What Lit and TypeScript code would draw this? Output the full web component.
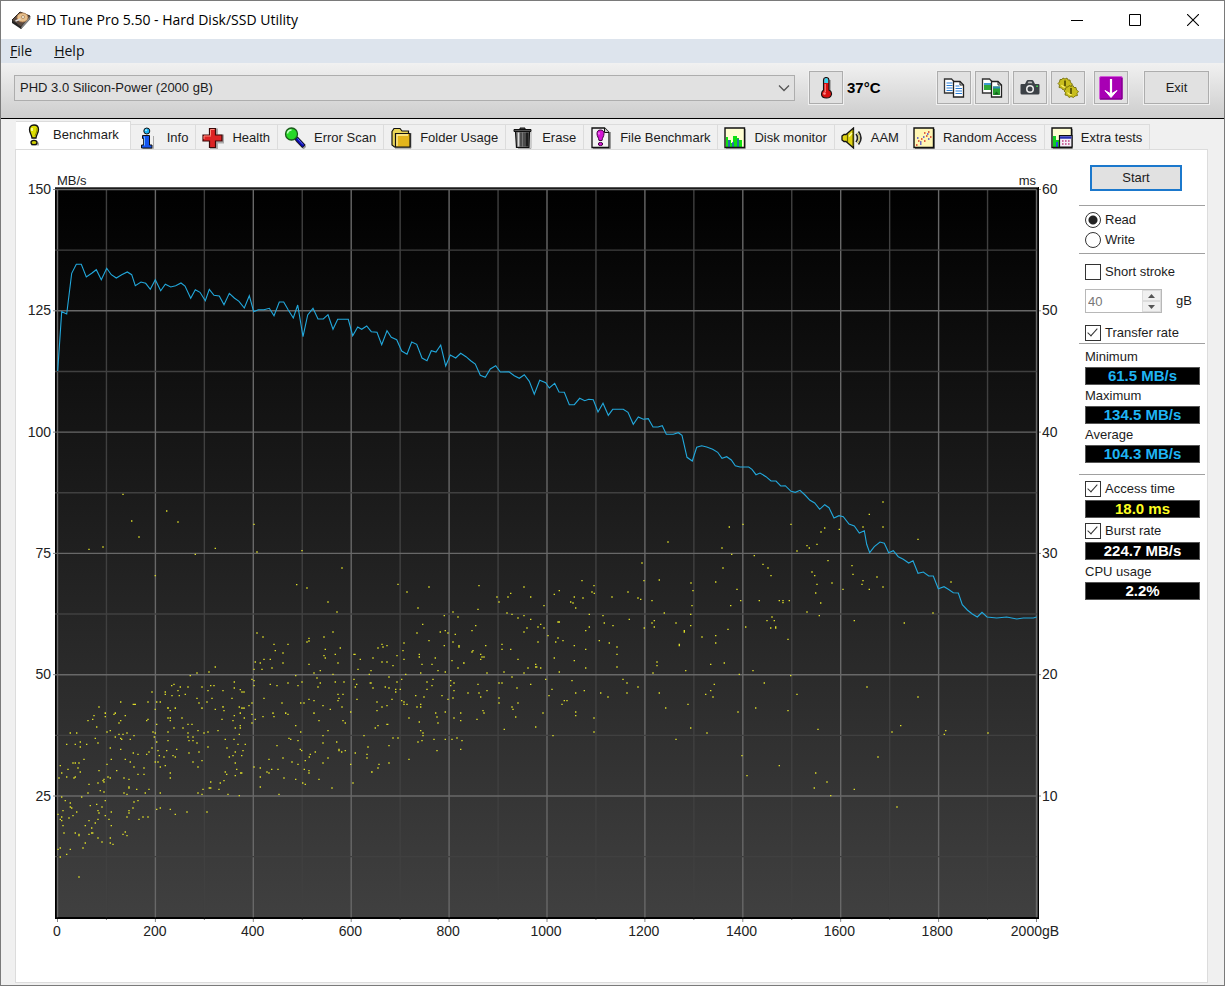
import { LitElement, html, svg, css } from "lit";
import { customElement, state } from "lit/decorators.js";

/* Chart geometry: the plot spans x 55..1039 and y 187..919 in chart units. */
const GRID_LEFT = 57.5;
const GRID_STEP_X = 48.95;
const GRID_TOP = 189.5;
const GRID_STEP_Y = 60.65;

/* Samples are stored in blocks, in thirds of a chart unit from the block's origin. */
interface Block {
  x: number;
  y: number;
  samples: string;
}

const TRANSFER: Block[] = [
  {
    x: 40,
    y: 180,
    samples:
      "53,573 65,395 80,402 95,280 109,253 124,253 139,291 155,280 169,269 184,299 200,265 214,284 229,294 245,284 262,276 275,284 286,317 303,306 317,310 331,328 346,299 362,332 376,313 392,321 407,317 423,309 435,318 452,355 466,329 480,337 496,362 508,328 522,346 538,348 552,374 568,340 583,354 597,364 613,384 628,347 641,395 655,389 672,389 688,385 702,407 718,366 731,366 745,390 760,414 773,375 789,470 803,405 819,385 834,417 850,417 864,404 879,448 893,418 925,418 938,467 953,441",
  },
  {
    x: 360,
    y: 250,
    samples:
      "5,238 20,228 34,245 51,247 65,284 81,242 94,262 110,269 125,303 141,313 155,276 170,283 186,324 201,332 214,302 228,306 242,285 257,348 271,315 287,324 302,310 318,320 332,332 346,342 361,376 376,382 391,357 407,347 421,366 447,365 463,377 478,385 493,374 508,394 523,433 539,391 557,398 568,414 584,400 597,426 613,427 628,464 643,464 659,445 674,452 686,448 700,449 714,486 729,460 745,496 758,478 790,478 804,487 820,523 835,501 850,508 865,506 879,531 894,531 907,527 919,553 940,553 955,548 966,556 981,622 997,633",
  },
  {
    x: 690,
    y: 380,
    samples:
      "20,202 35,197 50,201 68,208 83,217 96,235 110,230 124,240 136,257 150,261 176,261 186,268 198,284 210,279 228,290 243,303 258,303 272,318 286,317 303,334 316,337 330,331 345,345 360,361 374,369 389,388 404,374 417,383 432,414 447,407 460,410 477,432 493,438 508,459 523,452 530,493 539,518 553,500 570,486 583,490 596,518 610,512 625,530 640,538 656,549 669,542 684,580 700,576 716,588 730,588 745,626 762,620 775,628 790,638 805,639 817,674 832,690 847,702 862,711 876,697 891,711 920,714 950,711 980,717 1000,714 1030,714 1040,711",
  },
];

const ACCESS: Block[] = [
  {
    x: 40,
    y: 480,
    samples:
      "249,43 380,93 275,123 414,126 297,171 642,133 147,208 189,201 526,205 466,223 651,216 786,212 346,287 906,264 770,314 801,324 864,366 891,396 651,459 669,471 879,456 852,471 807,475 807,483 801,486 702,493 744,493 706,512 729,519 856,508 886,523 901,504 852,527 856,534 945,523 942,523 1014,504 999,534 961,538 672,538 691,538 646,546 661,549 729,549 894,549 807,553 642,568 666,568 696,564 526,561 507,576 471,579 451,587 841,572 822,579 879,583 954,568 993,572 988,583 767,587 831,594 636,598 642,602 583,606 786,606 744,609 841,609 886,606 912,606 942,598 950,613 946,621 991,609 999,624 402,613 395,617 421,621 444,621 486,621 512,617 522,617 583,624 642,617 691,613 711,617 774,617 834,621 601,629 606,636 612,636 549,632 504,632 414,632 376,636 336,636 376,643 396,647 418,647 436,643 471,655 516,655 576,655 672,655 894,643 909,643 897,655 894,662 951,658 807,658 822,662 242,666 324,666 350,666 361,666 477,669 501,666 636,669 726,669 782,669 792,669 1011,666 177,681 280,673 286,673 346,688 384,685 391,692 406,685 486,685 526,688 549,681 552,692 598,681 606,685 612,685 627,677 849,677 871,688 906,681 932,696 1011,692 196,699 222,703 226,699 256,707 162,707 583,707 601,699 636,703 699,699 737,699 744,703 822,699",
  },
  {
    x: 40,
    y: 700,
    samples:
      "242,6 283,13 286,13 324,6 350,6 361,6 477,9 501,6 636,9 726,9 782,9 792,9 177,21 346,28 384,23 391,32 406,24 486,24 526,28 549,20 552,32 598,21 606,24 612,24 627,17 849,17 871,28 906,21 932,36 1011,32 196,40 196,50 222,43 226,40 256,47 162,47 158,58 144,62 242,62 237,69 324,58 320,62 170,81 384,54 391,54 391,62 426,54 444,73 456,73 350,73 546,58 583,47 579,62 601,40 613,54 636,43 636,69 646,58 669,50 699,40 702,50 737,40 744,43 837,62 822,40 909,62 916,69 767,77 1014,77 1006,84 91,99 110,99 201,96 211,92 237,103 249,103 261,99 226,111 242,115 245,118 271,118 282,107 339,96 346,99 343,111 384,96 402,84 429,84 444,99 474,92 492,99 504,96 534,92 586,84 601,77 601,84 598,103 444,111 459,111 447,122 459,122 384,122 350,126 782,96 864,92 849,107 972,107 747,115 752,118 774,122 121,126 80,133 106,133 140,133 121,141 174,129 166,115 471,129 556,118 582,118 594,133 616,133 711,137 849,129 890,126 211,144 242,148 336,144 354,152 380,152 410,148 504,141 561,144 609,152 586,156 781,148 785,152 897,148 897,152 905,156 916,152 984,141 946,159 981,163 981,174 826,156 811,163 280,159 294,163 327,156 320,163 447,159 477,156 358,167 372,171 399,167 406,171 568,171 579,167 605,167 132,178 214,178 256,178 271,186 99,189 106,189 117,189 61,197 201,193 346,186 354,186 376,197 459,186 486,182 586,189 687,178 729,174 756,186 774,193 796,182 808,171 864,174 849,189 932,193 282,201 361,201 474,201 590,208 642,201 661,204 84,208 114,204 121,216 177,212 230,212 312,204 312,223 294,223 65,219 556,216 560,223 602,219 605,219 586,227 695,208 714,208 681,216 687,219 793,208 807,212 807,219 1014,204 995,216 57,234 80,231 102,234 106,231 204,231 211,234 252,234 267,238 391,219 391,234 661,231 732,234 767,238 837,238 192,238 189,242 192,246 174,249 147,253 552,242 541,249 512,246 788,249 796,253 939,249 876,264 267,261 267,264 290,268 327,268 489,268 508,264 512,264 537,268 661,261 181,272 192,276 144,279 252,279 261,283 316,279 361,279 474,279 486,283 564,283 598,287 717,283 65,291 125,291 76,302 91,309 196,302 282,306 294,302 91,321 95,324 151,317 170,313 186,321 69,332 110,336 99,347 174,332 177,339 196,347 214,336 267,332 267,339 279,324 350,328 361,324 391,328 406,343 441,336 501,336 54,343 65,351 61,358 65,362 87,354 147,362 174,358 166,369 207,358 261,351 297,358 309,351 324,351 69,377 136,377 214,377 155,384 72,399 106,399 117,403 117,407 147,403 155,399 158,399 249,403 256,396 261,407 174,414 211,414 136,429 186,426 211,429 219,433 54,448 61,444 91,448 129,444 80,463 61,471 117,531",
  },
  {
    x: 370,
    y: 580,
    samples:
      "84,13 177,21 327,17 462,21 111,36 381,51 387,66 414,51 422,40 482,51 522,77 553,43 568,32 613,51 639,54 602,66 609,69 617,84 636,2 672,17 666,36 673,40 726,51 774,36 804,54 812,58 846,62 822,2 868,0 969,32 966,77 144,84 324,88 249,96 223,107 264,111 411,99 426,103 444,114 462,107 482,118 512,133 504,141 522,144 471,144 462,156 658,103 699,107 778,118 703,129 729,137 658,141 647,152 564,126 568,126 883,99 962,103 918,129 962,137 853,122 846,129 853,141 823,144 943,152 943,156 996,171 928,193 928,197 158,133 141,159 317,137 306,152 211,156 226,152 234,159 256,163 534,167 564,174 557,186 579,182 613,197 688,182 718,189 741,201 741,223 36,193 24,204 39,201 51,197 102,189 177,182 249,186 223,197 267,197 267,201 347,197 309,212 306,216 396,193 396,208 422,208 504,186 647,208 99,212 9,234 81,227 148,223 148,231 102,238 36,246 51,246 69,257 156,253 186,253 196,234 246,242 281,249 282,249 332,223 332,238 336,231 342,231 444,238 553,234 613,242 497,253 497,261 500,261 512,264 474,264 741,261 647,264 861,246 861,257 849,279 947,272 3,272 204,272 226,276 152,279 264,264 351,279 402,276 462,279 568,276 107,283 57,291 95,298 189,298 3,309 81,306 171,306 186,317 242,302 242,317 252,309 324,313 387,309 396,309 426,291 482,313 527,298 606,302 759,298 771,309 804,321 9,324 46,321 57,324 77,328 77,336 91,328 171,328 252,332 294,339 327,339 351,332 332,351 441,324 546,328 643,332 617,339 692,339 771,339 714,351 868,339 1007,343 537,347 137,347 162,351 216,347 249,354 234,358 66,358 95,362 102,366 102,373 111,373 21,366 36,381 51,377 21,392 152,373 152,381 141,381 387,354 387,369 444,369 426,381 429,388 583,362 591,362 576,373 887,384 954,373 226,396 197,399 201,411 117,414 148,426 204,429 252,414 272,399 272,422 339,392 342,399 321,418 437,411 519,399 617,396 617,407 672,414 672,456 497,441 403,448 962,444 1011,459 51,433 53,433 24,437 16,444 152,452 159,459 159,467 549,467 69,474 84,474 144,486 156,482 192,478 226,478 246,478 261,474 276,482 57,497 201,512 272,508 918,478 117,538 57,549 27,553 24,564 6,576",
  },
  {
    x: 690,
    y: 380,
    samples:
      "579,366 538,403 118,441 159,433 303,433 404,444 393,456 448,448 519,441 579,441 684,478 96,504 125,523 193,527 321,513 351,497 358,504 381,493 219,553 234,564 99,564 243,587 414,542 366,576 374,587 486,557 489,583 561,591 -66,486 -144,549 3,609",
  },
  {
    x: 700,
    y: 580,
    samples:
      "47,6 111,28 122,62 92,77 178,62 238,62 249,62 249,68 268,62 351,13 347,39 362,69 396,9 429,28 489,2 486,13 508,28 549,21 753,6 321,96 358,107 463,122 613,129 699,99 216,111 201,122 223,122 212,144 227,141 227,144 137,141 84,148 47,167 47,189 6,171 264,178 32,253 73,249 159,272 118,283 272,287 193,309 43,313 32,332 17,343 39,351 291,343 501,321 654,351 114,396 167,384 264,392 21,459 354,448 576,456 602,437 733,463 737,452 864,459 126,527 534,531 238,557 141,587 347,579 381,606 343,624 463,628 392,647 591,681",
  },
];

const decode = (blocks: Block[]): [number, number][] =>
  blocks.flatMap((b) =>
    b.samples.split(" ").map((s): [number, number] => {
      const [px, py] = s.split(",").map(Number);
      return [+(b.x + px / 3).toFixed(1), +(b.y + py / 3).toFixed(1)];
    })
  );

const TRANSFER_POINTS = decode(TRANSFER).map((p) => p.join(",")).join(" ");
const ACCESS_PATH = decode(ACCESS)
  .map(([x, y]) => `M${(x - 0.7).toFixed(1)} ${y}h1.4`)
  .join("");

const outline = "#111";

const icons = {
  disk: svg`<svg viewBox="0 0 20 20" width="20" height="20"><path d="M1 10 9 2l10 4-9 11z" fill="#5c4a40" stroke="#2b2420"/><path d="m1 10 9 7v2L1 13z" fill="#222"/><path d="m19 6-9 11v2l9-10z" fill="#8d8d8d" stroke="#333" stroke-width=".5"/><ellipse cx="11.500" cy="7.500" rx="5.500" ry="4.500" fill="#e8c08c" stroke="#a9774a" stroke-width=".8"/><circle cx="12" cy="7" r="1.500" fill="#fff3df" stroke="#8a6640" stroke-width=".6"/><path d="m4.500 11 5-2" stroke="#ddd" stroke-width="1.500"/></svg>`,
  benchmark: svg`<svg viewBox="0 0 22 22" width="22" height="22"><path d="M8 20h8" stroke="#aaa" stroke-width="3"/><path d="M11 1c3.500 0 4.500 2 4.500 4.500C15.500 9 13.500 10 13 14H9C8.500 10 6.500 9 6.500 5.500 6.500 3 7.500 1 11 1z" fill="#dede00" stroke="${outline}" stroke-width="1.300"/><path d="M9 4v3" stroke="#ffffb0" stroke-width="1.600"/><path d="M14 4c.5 3-1 5-2 8" stroke="#8c8c00" fill="none"/><ellipse cx="11" cy="18.500" rx="3" ry="2.200" fill="#d0d000" stroke="${outline}" stroke-width="1.300"/></svg>`,
  info: svg`<svg viewBox="0 0 22 22" width="22" height="22"><path d="M6 21.500h10.500V9" stroke="#aaa" fill="none"/><circle cx="9.800" cy="4" r="3" fill="#19b4f5" stroke="${outline}"/><path d="M5.500 8.500h7v9.500H15v3H4.500v-3h2.200v-6.500H5.500z" fill="#1454f0" stroke="${outline}"/><path d="M7.500 9.500v9" stroke="#6eb4ff"/><circle cx="9" cy="3.200" r="1" fill="#a8eaff"/></svg>`,
  health: svg`<svg viewBox="0 0 22 22" width="22" height="22"><path d="M8 2.500h7v6h6v7h-6v6H8" fill="none" stroke="#aaa" stroke-width="2"/><path d="M7.500 1.500h6v6.500H20v6h-6.500v6.500h-6V14H1V8h6.500z" fill="#dc2424" stroke="#3a0808" stroke-width="1.200"/><path d="M8.500 8.500v-6h4M2 12V9h7" fill="none" stroke="#ff8a7c"/></svg>`,
  scan: svg`<svg viewBox="0 0 22 22" width="22" height="22"><path d="m13 13 8 8" stroke="#999" stroke-width="4"/><path d="m12 11 8 8.500" stroke="${outline}" stroke-width="4.600"/><path d="m12.500 11.500 7 7.500" stroke="#0c0cb4" stroke-width="3"/><path d="m13.500 11.500 5.500 6" stroke="#7c8cff" stroke-width=".8"/><circle cx="7.500" cy="7" r="6" fill="#28d828" stroke="#1c5a1c" stroke-width="1.300"/><path d="M3.500 6.500a4 4 0 0 1 4-3.500" fill="none" stroke="#c8ffc8" stroke-width="1.500"/></svg>`,
  folder: svg`<svg viewBox="0 0 22 22" width="22" height="22"><path d="M5 21.200h16V6" fill="none" stroke="#999"/><path d="M2 4.500 4 1.500h6L12 4h6.500v3H20v13H4.500L2 18z" fill="#e9d558" stroke="${outline}" stroke-width="1.200"/><path d="M5.500 6.500H20V20H5.500z" fill="#e3b51c" stroke="${outline}" stroke-width="1.200"/><path d="M7 19V8h11" fill="none" stroke="#fff0a0" stroke-width="1.300"/></svg>`,
  erase: svg`<svg viewBox="0 0 22 22" width="22" height="22"><path d="M6 21.500h13V5" fill="none" stroke="#aaa"/><path d="M3.500 4.500h14L17 20.500H4.500z" fill="#777" stroke="${outline}" stroke-width="1.200"/><path d="M6.500 5.500v14" stroke="#ddd" stroke-width="1.500"/><path d="M9 5.500v14M12 5.500v14" stroke="#333" stroke-width="1.200"/><path d="M15 5.500v14" stroke="#1e1e1e" stroke-width="3"/><path d="M2 2.500h17v2H2zM8 2.500V1h5v1.500" fill="#555" stroke="${outline}"/></svg>`,
  file: svg`<svg viewBox="0 0 22 22" width="22" height="22"><path d="M3 21.500h17.500V5" fill="none" stroke="#999"/><path d="M2 1h12.500L19 5.500v15H2z" fill="#f2f2f2" stroke="${outline}" stroke-width="1.300"/><path d="M14.500 1v4.500H19" fill="#ccc" stroke="${outline}"/><path d="M10.500 3c2.600 0 3.500 1.600 3.500 3.800 0 2.600-1.700 3.700-2 6.700H9c-.3-3-2-4.100-2-6.700C7 4.600 7.900 3 10.500 3z" fill="#d414d4" stroke="#400040"/><path d="M9 5.500v2" stroke="#ff9aff" stroke-width="1.300"/><ellipse cx="10.500" cy="17" rx="2.200" ry="1.600" fill="#d414d4" stroke="#400040"/></svg>`,
  monitor: svg`<svg viewBox="0 0 22 22" width="22" height="22"><path d="M2 21.500h19.500V2" fill="none" stroke="#aaa"/><path d="M1 1h19.500v19.500H1z" fill="#fffed2"/><path d="M2 20V10h2v3h3v3h2V9h4v2h2v2h3v7z" fill="#10e010"/><path d="M5 20v-7M9 20v-5M14 20v-8" stroke="#2a50d8" stroke-width="1.500"/><path d="M1 1h19.500v19.500H1z" fill="none" stroke="${outline}" stroke-width="1.400"/></svg>`,
  speaker: svg`<svg viewBox="0 0 22 22" width="22" height="22"><path d="M1 9 3 7.500h2L12.500 1v20L5 14.500H3L1 13z" fill="#e0d414" stroke="${outline}" stroke-width="1.300"/><path d="M6.500 7v8M12 3v16" stroke="#6a6400" stroke-width="1.200"/><path d="M8 9.500 11 6" stroke="#ffffa8" stroke-width="1.200"/><path d="M15 7q3 4 0 8M17.500 4.500q5 6.500 0 13" fill="none" stroke="#222" stroke-width="1.600"/><path d="M16.300 5.800q4 5.200 0 10.400" fill="none" stroke="#c4ba3c"/></svg>`,
  random: svg`<svg viewBox="0 0 22 22" width="22" height="22"><path d="M2 21.500h19.500V2" fill="none" stroke="#777"/><path d="M1 1h19.500v19.500H1z" fill="#fff6b4" stroke="${outline}" stroke-width="1.400"/><path d="M11 6h1.500M15 5h1.500M13 9h1.500M8 12h1.500M11 14h1.500M5 14h1.500M3 18h1.500M17 10h1.500" stroke="#d83020" stroke-width="1.500"/><path d="M4 11h1.500M7 15h1.500M14 7h1.500M10 10h1.500M15 12h1.500M7 17h1.500" stroke="#4646c8" stroke-width="1.500"/></svg>`,
  extra: svg`<svg viewBox="0 0 22 22" width="22" height="22"><path d="M2 21.500h19.500V2" fill="none" stroke="#999"/><path d="M1 1h19.500v19.500H1z" fill="#fffed2"/><path d="M2 20V9h3v4h3v7z" fill="#10d020"/><path d="M5 20v-5h2v5z" fill="#2a50d8"/><path d="M1 1h19.500v19.500H1z" fill="none" stroke="${outline}" stroke-width="1.400"/><path d="M8.500 8.500H21V20H8.500z" fill="#f4eef8" stroke="${outline}" stroke-width="1.200"/><path d="M9 10.500h11.500" stroke="#2830b0" stroke-width="2.500"/><path d="M11 14h8M11 17h8" stroke="#c04080" stroke-width="1.600" stroke-dasharray="1.600 1.400"/></svg>`,
  thermometer: svg`<svg viewBox="0 0 22 22" width="22" height="22"><path d="M14.500 3v13" stroke="#aaa" stroke-width="3"/><path d="M8.500 3q0-2.500 2.700-2.500T14 3v10q3 1.500 2.500 4.500-.8 3.500-5 3.500-5 0-5-4 0-2.500 2-4z" fill="#d81010" stroke="${outline}" stroke-width="1.100"/><path d="M9.200 3q0-2 2-2t2 2v3h-4z" fill="#38d8f0"/><path d="M10.200 7v8" stroke="#ff9a9a"/><circle cx="9.500" cy="16.500" r="1.300" fill="#ff8c8c"/></svg>`,
  copyText: svg`<svg viewBox="0 0 22 22" width="22" height="22"><path d="M1.500 2h7l3 3v11h-10z" fill="#fff" stroke="#333" stroke-width="1.300"/><path d="M3.500 6h6M3.500 8.500h6M3.500 11h6M3.500 13.500h6" stroke="#2c80d8"/><path d="M10.500 4.500h6.500l3.500 3.500v12H10.500z" fill="#fff" stroke="#222" stroke-width="1.300"/><path d="M17 4.500V8h3.500" fill="none" stroke="#222"/><path d="M12.500 9h4M12.500 11.500h6.500M12.500 14h6.500M12.500 16.500h6.500" stroke="#2c80d8" stroke-width="1.200"/></svg>`,
  copyImage: svg`<svg viewBox="0 0 22 22" width="22" height="22"><path d="M1.500 2h7l3 3v11h-10z" fill="#fff" stroke="#333" stroke-width="1.300"/><path d="M3 6h7v7H3z" fill="#2fa838"/><path d="M3 6h7v2H3z" fill="#3d9ad0"/><path d="M10.500 4.500h6.500l3.500 3.500v12H10.500z" fill="#fff" stroke="#222" stroke-width="1.300"/><path d="M17 4.500V8h3.500" fill="none" stroke="#222"/><path d="M12 9.500h7v8.500h-7z" fill="#28a030"/><path d="M12 9.500h7v2h-7z" fill="#2f88b8"/><path d="m13 17.500 2.500-3 2.500 3" fill="#156020"/></svg>`,
  camera: svg`<svg viewBox="0 0 22 22" width="22" height="22"><path d="M1.500 8q0-1 1-1H6l1.500-3q.5-1 1.500-1h4q1 0 1.500 1L16 7h3.500q1 0 1 1v8q0 1.500-1.500 1.500H3Q1.500 17.500 1.500 16z" fill="#3c4146"/><path d="M8.500 6.300 9.500 4.500h3l1 1.800z" fill="#bbb"/><circle cx="11" cy="12" r="4" fill="#eee"/><circle cx="11" cy="12" r="2.500" fill="#3c4146"/><path d="M17.200 8.500H19v1.600h-1.800z" fill="#3fd04a"/></svg>`,
  gears: svg`<svg viewBox="0 0 22 22" width="22" height="22"><g fill="#c8be1e" stroke="#6c6600" stroke-width=".8" stroke-linejoin="round"><path d="m6 1 2 1 2-1 1 2h2l.5 2.500L15.500 7 14 9l.5 2-2.500.5L10.500 13 8 12l-2 1-1.500-2L2 10.500 2.500 8 1 6.500 2.500 5 3 2.500h2z"/><path d="m12 8.500 2 1 2-1 1 2h2l.5 2.500 2 1.500-1.500 2 .5 2-2.500.5-1.500 1.500-2.500-1-2 1-1.500-2L8 18l.5-2.500L7 14l1.500-1.500L9 10h2z"/></g><path d="M8 3.500v6M14 11v6" stroke="#4c4800" stroke-width="1.600"/><path d="M4.500 8q1.500 2.500 4 2M10.500 15.500q1.500 2.500 4 2" fill="none" stroke="#fff26a" stroke-width="1.200"/></svg>`,
  save: svg`<svg viewBox="0 0 24 24" width="24" height="24"><rect x=".5" y=".5" width="23" height="23" rx="1.500" fill="#a800b4" stroke="#d25cd8"/><path d="M1 23h22V2" fill="none" stroke="#6c0078"/><path d="M12 3v16" fill="none" stroke="#fff" stroke-width="2.200"/><path d="M6 14.500 12 18l6-3.500-6 7z" fill="#fff" stroke="#fff"/></svg>`,
  minimize: svg`<svg viewBox="0 0 12 12" width="12" height="12"><path d="M0 6.500h12" stroke="#000"/></svg>`,
  maximize: svg`<svg viewBox="0 0 12 12" width="12" height="12"><path d="M.5.500h11v11H.5z" fill="none" stroke="#000"/></svg>`,
  close: svg`<svg viewBox="0 0 12 12" width="12" height="12"><path d="m0 0 12 12M12 0 0 12" stroke="#000" stroke-width="1.100"/></svg>`,
  chevron: svg`<svg viewBox="0 0 12 8" width="12" height="8"><path d="m1 1.500 5 5 5-5" fill="none" stroke="#555" stroke-width="1.300"/></svg>`,
};

const TABS = [
  { name: "Benchmark", icon: icons.benchmark },
  { name: "Info", icon: icons.info },
  { name: "Health", icon: icons.health },
  { name: "Error Scan", icon: icons.scan },
  { name: "Folder Usage", icon: icons.folder },
  { name: "Erase", icon: icons.erase },
  { name: "File Benchmark", icon: icons.file },
  { name: "Disk monitor", icon: icons.monitor },
  { name: "AAM", icon: icons.speaker },
  { name: "Random Access", icon: icons.random },
  { name: "Extra tests", icon: icons.extra },
];

@customElement("benchmark-chart")
export class BenchmarkChart extends LitElement {
  static styles = css`
    :host {
      display: grid;
      grid-template-columns: 39px minmax(0, 1fr) 40px;
      grid-template-rows: 37px auto 24px;
      color: #222;
      font: 14px/16px "Liberation Sans", Arial, sans-serif;
    }
    .units {
      grid-column: 2;
      display: flex;
      justify-content: space-between;
      align-items: flex-end;
      padding: 0 3px 0 2px;
      font-size: 13px;
      line-height: 13px;
    }
    .scale {
      grid-row: 2;
      display: flex;
      flex-direction: column;
      justify-content: space-between;
      padding: 2px 0;
    }
    .speed {
      grid-column: 1;
      align-items: flex-end;
      padding-right: 4px;
    }
    .time {
      grid-column: 3;
      padding-left: 3px;
    }
    .mark {
      display: flex;
      align-items: center;
      height: 0;
    }
    .plot {
      grid-column: 2;
      grid-row: 2;
      display: block;
      width: 100%;
      aspect-ratio: 984 / 732;
      overflow: visible;
    }
    .capacity {
      grid-column: 2;
      grid-row: 3;
      display: flex;
      justify-content: space-between;
      padding: 4px 4px 0 2px;
    }
    .stop {
      display: flex;
      justify-content: center;
      width: 0;
    }
    .major {
      stroke: #686868;
      stroke-width: 1.4;
    }
    .minor {
      stroke: #404040;
      stroke-width: 1.4;
    }
    .tick {
      stroke: #888;
    }
    .transfer {
      fill: none;
      stroke: #22a8dc;
      stroke-width: 1.1;
    }
    .access {
      fill: none;
      stroke: #dcdc28;
      stroke-width: 1.3;
    }
  `;

  private lines() {
    const right = GRID_LEFT + GRID_STEP_X * 20;
    const bottom = GRID_TOP + GRID_STEP_Y * 12;
    const order = (n: number) =>
      Array.from({ length: n }, (_, i) => i).sort((a, b) => (b % 2) - (a % 2));
    return svg`
      ${order(21).map((i) => {
        const x = GRID_LEFT + GRID_STEP_X * i;
        return svg`<line class=${i % 2 ? "minor" : "major"} x1=${x} x2=${x} y1=${GRID_TOP} y2=${bottom}/>
          <line class="tick" x1=${x} x2=${x} y1="919" y2=${i % 2 ? 920 : 922}/>`;
      })}
      ${order(12).map((i) => {
        const y = GRID_TOP + GRID_STEP_Y * i;
        return svg`<line class=${i % 2 ? "minor" : "major"} x1="55" x2=${right} y1=${y} y2=${y}/>
          ${i % 2 ? "" : svg`<line class="tick" x1="53" x2="55" y1=${y} y2=${y}/><line class="tick" x1="1039" x2="1041" y1=${y} y2=${y}/>`}`;
      })}`;
  }

  render() {
    return html`
      <div class="units"><span>MB/s</span><span>ms</span></div>
      <div class="scale speed">
        ${["150", "125", "100", "75", "50", "25", ""].map((t) => html`<span class="mark">${t}</span>`)}
      </div>
      <svg class="plot" viewBox="55 187 984 732" role="img" aria-label="Transfer rate and access time">
        <defs>
          <linearGradient id="shade" x1="0" y1="0" x2="0" y2="1">
            <stop offset="0" stop-color="#000" />
            <stop offset="1" stop-color="#404040" />
          </linearGradient>
        </defs>
        <rect x="55" y="187" width="984" height="732" fill="#000" />
        <rect x="57" y="189" width="981" height="728" fill="url(#shade)" />
        <path d="M55 187.500H1038" stroke="#555" />
        ${this.lines()}
        <path class="access" d=${ACCESS_PATH} />
        <polyline class="transfer" points=${TRANSFER_POINTS} />
      </svg>
      <div class="scale time">
        ${["60", "50", "40", "30", "20", "10", ""].map((t) => html`<span class="mark">${t}</span>`)}
      </div>
      <div class="capacity">
        ${["0", "200", "400", "600", "800", "1000", "1200", "1400", "1600", "1800", "2000gB"].map(
          (t) => html`<span class="stop">${t}</span>`
        )}
      </div>
    `;
  }
}

@customElement("app-root")
export class AppRoot extends LitElement {
  static styles = css`
    :host {
      display: block;
      box-sizing: border-box;
      min-height: 100vh;
      padding-bottom: 2px;
      border: 1px solid #7a7a7a;
      background: #f0f0f0;
      color: #1c1c1c;
      font: 13px/16px "Liberation Sans", Arial, sans-serif;
    }
    button,
    input,
    select {
      box-sizing: border-box;
      margin: 0;
      border-radius: 0;
      color: inherit;
      font: inherit;
    }
    svg {
      display: block;
      flex: none;
    }
    .titlebar {
      display: flex;
      align-items: center;
      gap: 5px;
      height: 38px;
      padding-left: 10px;
      background: #fff;
      color: #000;
      font: 14px/20px "Open Sans", "Noto Sans", sans-serif;
    }
    .title {
      flex: 1;
      font: inherit;
      margin: 0;
    }
    .controls {
      display: flex;
      height: 100%;
      padding-right: 2px;
    }
    .control {
      display: grid;
      place-items: center;
      width: 58px;
      border: 0;
      background: none;
    }
    .menu {
      display: flex;
      gap: 22px;
      height: 24px;
      padding-left: 9px;
      background: #dde4ed;
      font: 14px/24px "Open Sans", "Noto Sans", sans-serif;
    }
    .menu a {
      color: #111;
      text-decoration: none;
    }
    .toolbar {
      display: flex;
      align-items: center;
      height: 56px;
      box-sizing: border-box;
      padding: 0 15px 6px 13px;
      border-bottom: 1px solid #000;
      background: linear-gradient(#f1f1f1, #cdcdcd);
    }
    .drive {
      flex: 1;
      display: grid;
      align-items: center;
      margin-right: 14px;
    }
    .drive > * {
      grid-area: 1 / 1;
    }
    .drive select {
      width: 100%;
      height: 26px;
      padding: 0 24px 0 5px;
      border: 1px solid #adadad;
      background: #e1e1e1;
      appearance: none;
    }
    .drive svg {
      justify-self: end;
      margin-right: 5px;
      pointer-events: none;
    }
    .temperature {
      flex: 0 0 94px;
      box-sizing: border-box;
      padding-left: 4px;
      color: #000;
      font-size: 15px;
      font-weight: bold;
    }
    .tool {
      display: grid;
      place-items: center;
      width: 34px;
      height: 33px;
      padding: 0;
      border: 1px solid #adadad;
      background: #e1e1e1;
      box-shadow: 0 0 0 1px #f0f0f0;
    }
    .tools {
      display: flex;
      gap: 4px;
      margin-right: 9px;
    }
    .exit {
      width: 65px;
      margin-left: 16px;
    }
    .tabs {
      display: flex;
      align-items: flex-end;
      height: 30px;
      padding-left: 15px;
    }
    .tab {
      display: flex;
      align-items: center;
      gap: 8px;
      height: 25px;
      padding: 1px 7px 0 6px;
      border: 1px solid #dcdcdc;
      border-width: 1px 1px 0 0;
      background: #f0f0f0;
      white-space: nowrap;
    }
    .tab.active {
      height: 28px;
      padding: 0 11px 1px 7px;
      background: #fff;
    }
    .page {
      display: grid;
      grid-template-columns: minmax(0, 1fr) 128px;
      margin: 0 16px 0 14px;
      padding-bottom: 39px;
      border: 1px solid #dcdcdc;
      background: #fff;
    }
    .side {
      display: flex;
      flex-direction: column;
      padding: 15px 2px 0 0;
    }
    .start {
      height: 26px;
      margin: 0 23px 14px 11px;
      border: 2px solid #1b78cc;
      background: #e1e1e1;
    }
    .group {
      display: flex;
      flex-direction: column;
      border-top: 1px solid #a0a0a0;
      padding: 4px 5px 3px 6px;
    }
    .group.limits {
      padding-top: 8px;
      padding-bottom: 0;
    }
    .group.rates {
      padding-bottom: 9px;
    }
    .option {
      display: flex;
      align-items: center;
      gap: 4px;
      height: 20px;
    }
    .option input {
      position: relative;
      flex: none;
      width: 16px;
      height: 16px;
      border: 1px solid #333;
      background: #fff;
      appearance: none;
    }
    .option input[type="radio"] {
      border-radius: 50%;
    }
    .option input[type="radio"]:checked {
      background: radial-gradient(circle, #222 4px, #fff 5px);
    }
    .option input[type="checkbox"]:checked::after {
      content: "";
      position: absolute;
      left: 4px;
      top: 0;
      width: 4px;
      height: 9px;
      border: solid #333;
      border-width: 0 1px 1px 0;
      transform: rotate(42deg);
    }
    .amount {
      display: flex;
      align-items: center;
      height: 24px;
      margin: 7px 0 10px;
    }
    .spin {
      display: grid;
      grid-template-columns: 56px 19px;
      grid-template-rows: 11px 11px;
      margin-right: 14px;
      border: 1px solid #b8b8b8;
      background: #f0f0f0;
    }
    .spin input {
      grid-row: 1 / 3;
      width: 100%;
      height: 22px;
      padding: 0 2px;
      border: 0;
      background: #fff;
      color: #777;
    }
    .step {
      display: grid;
      place-items: center;
      padding: 0;
      border: 1px solid #dcdcdc;
      background: #f0f0f0;
    }
    .name {
      height: 18px;
      line-height: 18px;
    }
    .name + .value,
    .option + .value {
      margin-top: 1px;
    }
    .value {
      height: 18px;
      margin-bottom: 3px;
      border: 1px solid #555;
      box-sizing: border-box;
      background: #000;
      color: #fff;
      font-size: 15px;
      font-weight: bold;
      line-height: 16px;
      text-align: center;
    }
    .group.rates .value {
      margin-bottom: 2px;
    }
    .value.rate {
      color: #1fb4f4;
    }
    .value.access {
      color: #ffff20;
    }
  `;

  @state() private activeTab = "Benchmark";

  private arrow(up: boolean) {
    return html`<svg viewBox="0 0 7 4" width="7" height="4">
      <path d=${up ? "M0 4 3.500 0 7 4z" : "M0 0 3.500 4 7 0z"} fill="#555" />
    </svg>`;
  }

  render() {
    return html`
      <header class="titlebar">
        ${icons.disk}
        <h1 class="title">HD Tune Pro 5.50 - Hard Disk/SSD Utility</h1>
        <div class="controls">
          <button class="control" aria-label="Minimize">${icons.minimize}</button>
          <button class="control" aria-label="Maximize">${icons.maximize}</button>
          <button class="control" aria-label="Close">${icons.close}</button>
        </div>
      </header>
      <nav class="menu">
        <a href="#file"><u>F</u>ile</a>
        <a href="#help"><u>H</u>elp</a>
      </nav>
      <div class="toolbar">
        <div class="drive">
          <select aria-label="Drive">
            <option>PHD 3.0 Silicon-Power (2000 gB)</option>
          </select>
          ${icons.chevron}
        </div>
        <button class="tool" aria-label="Temperature">${icons.thermometer}</button>
        <span class="temperature">37°C</span>
        <div class="tools">
          <button class="tool" aria-label="Copy text">${icons.copyText}</button>
          <button class="tool" aria-label="Copy image">${icons.copyImage}</button>
          <button class="tool" aria-label="Screenshot">${icons.camera}</button>
          <button class="tool" aria-label="Options">${icons.gears}</button>
        </div>
        <button class="tool" aria-label="Save">${icons.save}</button>
        <button class="tool exit">Exit</button>
      </div>
      <div class="tabs" role="tablist">
        ${TABS.map(
          (t) => html`<button
            class="tab ${t.name === this.activeTab ? "active" : ""}"
            role="tab"
            aria-selected=${t.name === this.activeTab}
            @click=${() => (this.activeTab = t.name)}
          >
            ${t.icon}<span>${t.name}</span>
          </button>`
        )}
      </div>
      <main class="page">
        <benchmark-chart></benchmark-chart>
        <aside class="side">
          <button class="start">Start</button>
          <div class="group">
            <label class="option"><input type="radio" name="mode" checked />Read</label>
            <label class="option"><input type="radio" name="mode" />Write</label>
          </div>
          <div class="group limits">
            <label class="option"><input type="checkbox" />Short stroke</label>
            <div class="amount">
              <div class="spin">
                <input id="size" type="text" value="40" disabled />
                <button class="step" aria-label="Increase">${this.arrow(true)}</button>
                <button class="step" aria-label="Decrease">${this.arrow(false)}</button>
              </div>
              <label for="size">gB</label>
            </div>
            <label class="option"><input type="checkbox" checked />Transfer rate</label>
          </div>
          <div class="group rates">
            <span class="name">Minimum</span><output class="value rate">61.5 MB/s</output>
            <span class="name">Maximum</span><output class="value rate">134.5 MB/s</output>
            <span class="name">Average</span><output class="value rate">104.3 MB/s</output>
          </div>
          <div class="group">
            <label class="option"><input type="checkbox" checked />Access time</label>
            <output class="value access">18.0 ms</output>
            <label class="option"><input type="checkbox" checked />Burst rate</label>
            <output class="value">224.7 MB/s</output>
            <span class="name">CPU usage</span><output class="value">2.2%</output>
          </div>
        </aside>
      </main>
    `;
  }
}
